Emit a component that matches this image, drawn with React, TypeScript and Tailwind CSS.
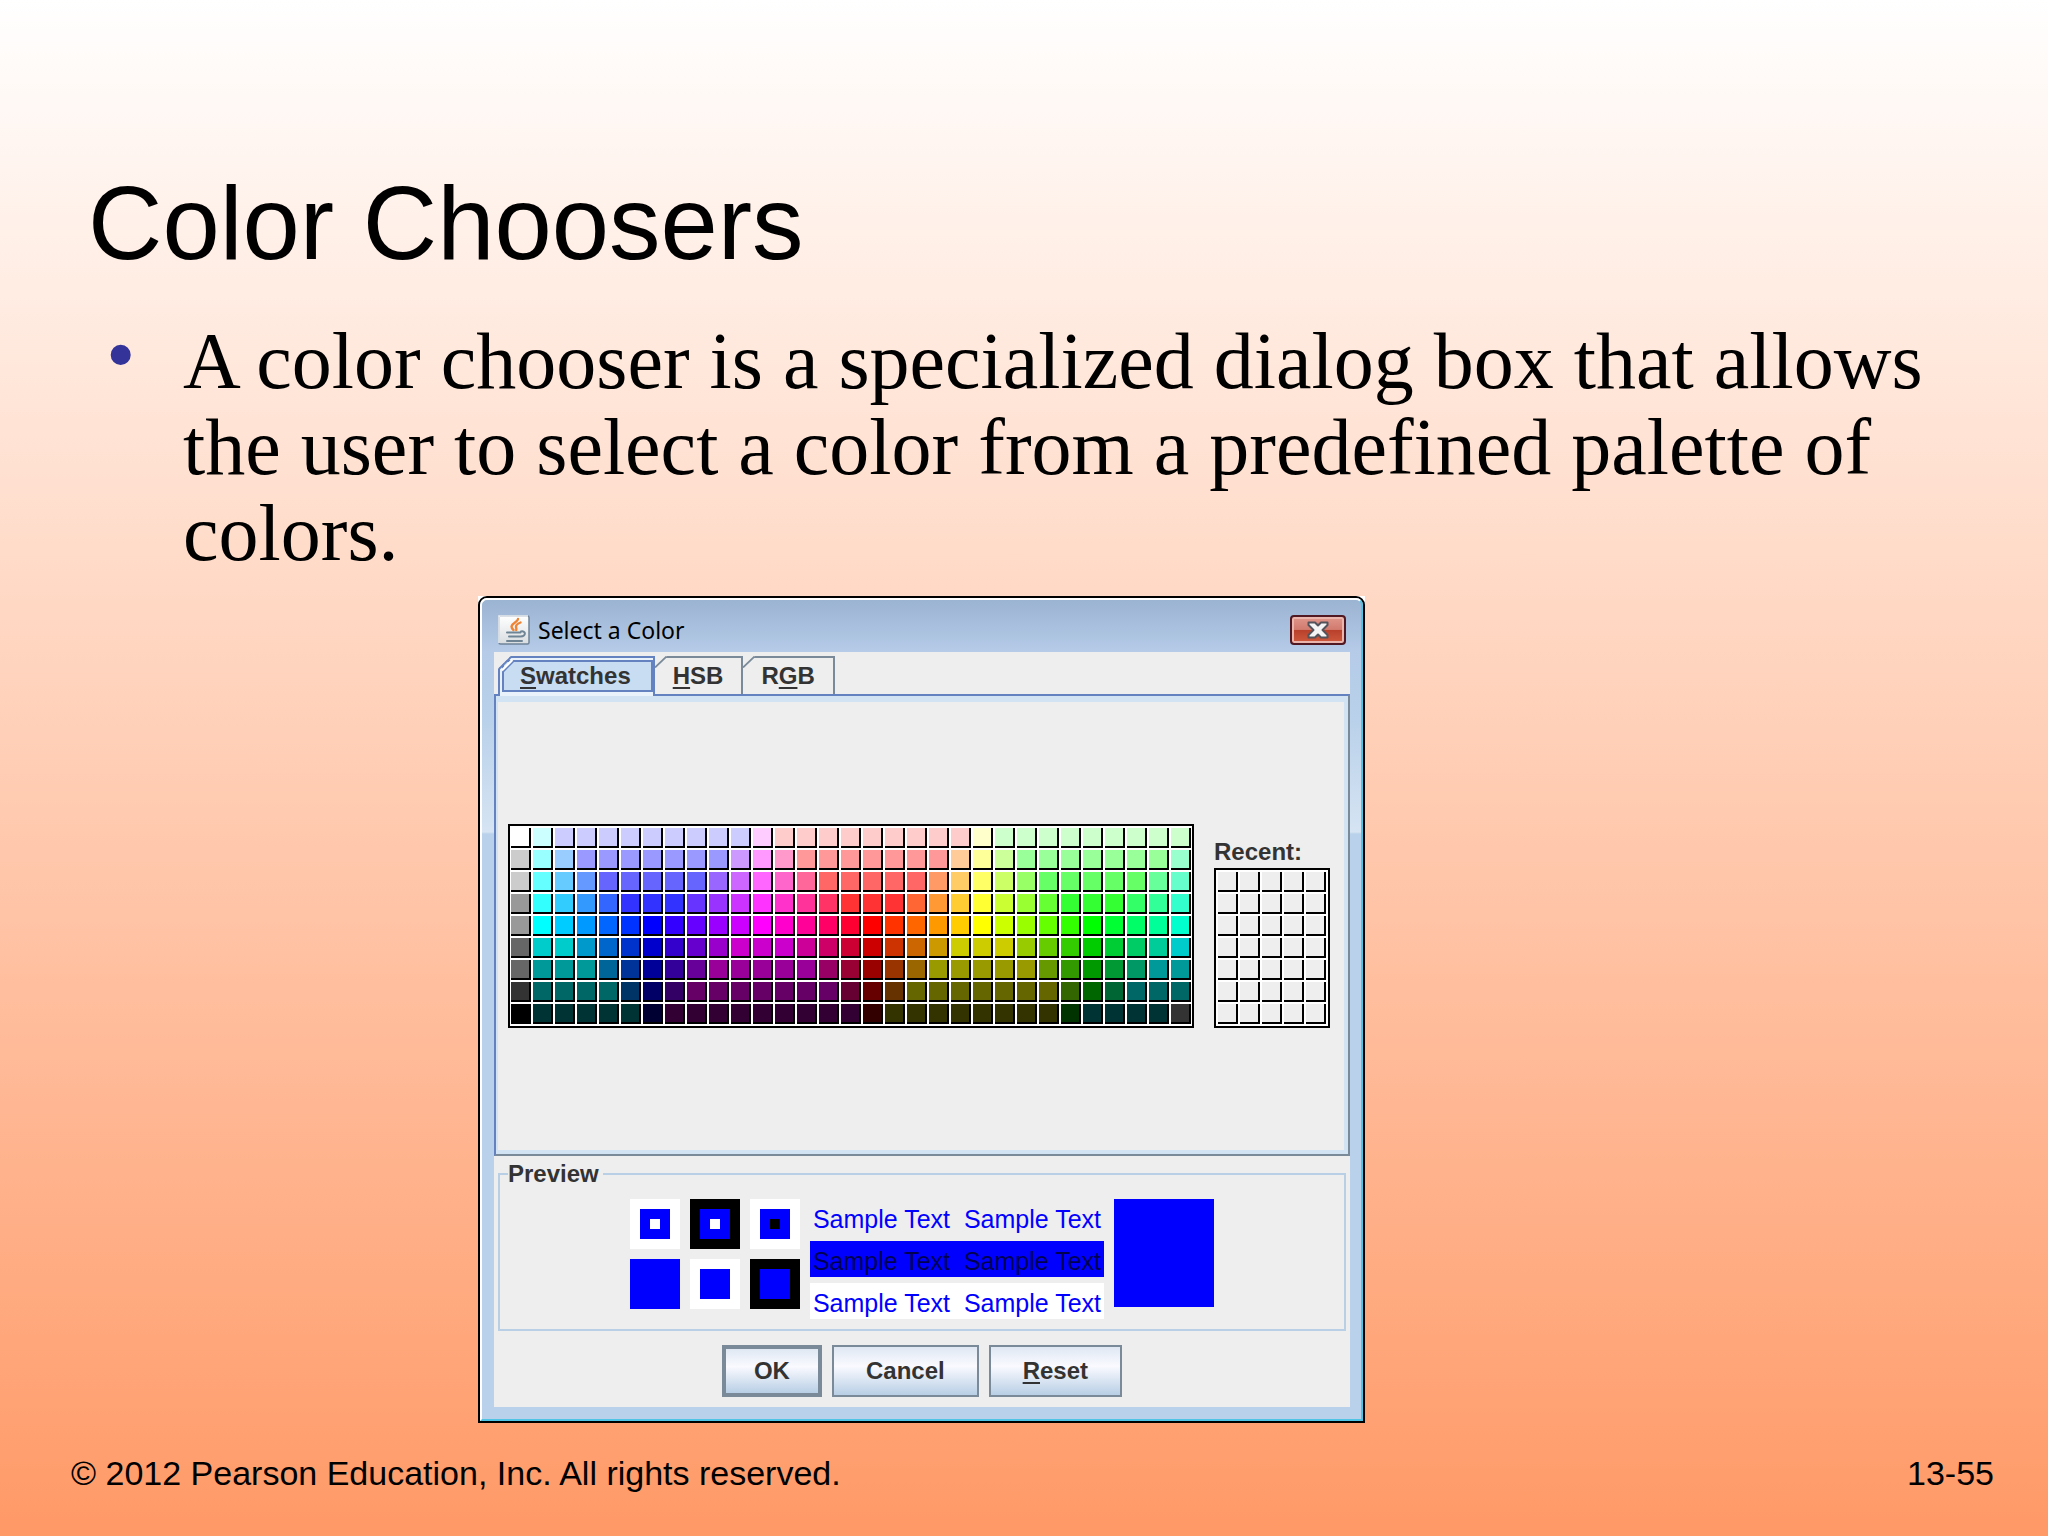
import type { ReactNode } from "react";

type Run = [string, number];

const PALETTE: Run[][] = [
  [["#ffffff", 1], ["#ccffff", 1], ["#ccccff", 9], ["#ffccff", 1], ["#ffcccc", 9], ["#ffffcc", 1], ["#ccffcc", 9]],
  [["#cccccc", 1], ["#99ffff", 1], ["#99ccff", 1], ["#9999ff", 7], ["#cc99ff", 1], ["#ff99ff", 1], ["#ff99cc", 1], ["#ff9999", 7], ["#ffcc99", 1], ["#ffff99", 1], ["#ccff99", 1], ["#99ff99", 7], ["#99ffcc", 1]],
  [["#cccccc", 1], ["#66ffff", 1], ["#66ccff", 1], ["#6699ff", 1], ["#6666ff", 5], ["#9966ff", 1], ["#cc66ff", 1], ["#ff66ff", 1], ["#ff66cc", 1], ["#ff6699", 1], ["#ff6666", 5], ["#ff9966", 1], ["#ffcc66", 1], ["#ffff66", 1], ["#ccff66", 1], ["#99ff66", 1], ["#66ff66", 5], ["#66ff99", 1], ["#66ffcc", 1]],
  [["#999999", 1], ["#33ffff", 1], ["#33ccff", 1], ["#3399ff", 1], ["#3366ff", 1], ["#3333ff", 3], ["#6633ff", 1], ["#9933ff", 1], ["#cc33ff", 1], ["#ff33ff", 1], ["#ff33cc", 1], ["#ff3399", 1], ["#ff3366", 1], ["#ff3333", 3], ["#ff6633", 1], ["#ff9933", 1], ["#ffcc33", 1], ["#ffff33", 1], ["#ccff33", 1], ["#99ff33", 1], ["#66ff33", 1], ["#33ff33", 3], ["#33ff66", 1], ["#33ff99", 1], ["#33ffcc", 1]],
  [["#999999", 1], ["#00ffff", 1], ["#00ccff", 1], ["#0099ff", 1], ["#0066ff", 1], ["#0033ff", 1], ["#0000ff", 1], ["#3300ff", 1], ["#6600ff", 1], ["#9900ff", 1], ["#cc00ff", 1], ["#ff00ff", 1], ["#ff00cc", 1], ["#ff0099", 1], ["#ff0066", 1], ["#ff0033", 1], ["#ff0000", 1], ["#ff3300", 1], ["#ff6600", 1], ["#ff9900", 1], ["#ffcc00", 1], ["#ffff00", 1], ["#ccff00", 1], ["#99ff00", 1], ["#66ff00", 1], ["#33ff00", 1], ["#00ff00", 1], ["#00ff33", 1], ["#00ff66", 1], ["#00ff99", 1], ["#00ffcc", 1]],
  [["#666666", 1], ["#00cccc", 2], ["#0099cc", 1], ["#0066cc", 1], ["#0033cc", 1], ["#0000cc", 1], ["#3300cc", 1], ["#6600cc", 1], ["#9900cc", 1], ["#cc00cc", 3], ["#cc0099", 1], ["#cc0066", 1], ["#cc0033", 1], ["#cc0000", 1], ["#cc3300", 1], ["#cc6600", 1], ["#cc9900", 1], ["#cccc00", 3], ["#99cc00", 1], ["#66cc00", 1], ["#33cc00", 1], ["#00cc00", 1], ["#00cc33", 1], ["#00cc66", 1], ["#00cc99", 1], ["#00cccc", 1]],
  [["#666666", 1], ["#009999", 3], ["#006699", 1], ["#003399", 1], ["#000099", 1], ["#330099", 1], ["#660099", 1], ["#990099", 5], ["#990066", 1], ["#990033", 1], ["#990000", 1], ["#993300", 1], ["#996600", 1], ["#999900", 5], ["#669900", 1], ["#339900", 1], ["#009900", 1], ["#009933", 1], ["#009966", 1], ["#009999", 2]],
  [["#333333", 1], ["#006666", 4], ["#003366", 1], ["#000066", 1], ["#330066", 1], ["#660066", 7], ["#660033", 1], ["#660000", 1], ["#663300", 1], ["#666600", 7], ["#336600", 1], ["#006600", 1], ["#006633", 1], ["#006666", 3]],
  [["#000000", 1], ["#003333", 5], ["#000033", 1], ["#330033", 9], ["#330000", 1], ["#333300", 8], ["#003300", 1], ["#003333", 4], ["#333333", 1]],
];

const SWATCHES = PALETTE.flatMap((row) => row.flatMap(([color, count]) => Array<string>(count).fill(color)));

function Swatch({ color, label }: { color: string; label: string }) {
  return (
    <button
      type="button"
      aria-label={label}
      className="size-5 border-r-2 border-b-2 border-black"
      style={{ backgroundColor: color }}
    />
  );
}

function JavaIcon() {
  return (
    <svg viewBox="0 0 32 30" className="h-[30px] w-8" aria-hidden="true">
      <defs>
        <linearGradient id="java-tile" x1="0" y1="0" x2="0" y2="1">
          <stop offset="0" stopColor="#ffffff" />
          <stop offset="1" stopColor="#d9dde0" />
        </linearGradient>
      </defs>
      <rect x="1" y="1" width="30" height="28" rx="1.5" fill="url(#java-tile)" stroke="#6f8499" strokeWidth="1.5" />
      <path d="M1 28V1H30" fill="none" stroke="#f2f5f8" strokeWidth="1.5" />
      <path
        d="M20 4c0 3-6 4-6.500 7.500 0 1.500.8 2.500 2 3.500M22.500 7.500c-3 1.200-4.700 2.500-4.500 4.500.1 1 .8 1.800.2 3"
        fill="none"
        stroke="#ee8434"
        strokeWidth="2.400"
        strokeLinecap="round"
      />
      <path
        d="M9 17.500h13.500M11 21.500h10.500M9 26h15M23 16.500c5-1 5.500 4.500-.5 5"
        fill="none"
        stroke="#6f8596"
        strokeWidth="2"
        strokeLinecap="round"
      />
    </svg>
  );
}

function TabCorner({ selected }: { selected?: boolean }) {
  return selected ? (
    <svg viewBox="0 0 16 16" className="absolute -top-0.5 -left-0.5 size-4" aria-hidden="true">
      <path d="M0 0H13L0 13Z" fill="#eeeeee" />
      <path d="M1 13L13 1" stroke="#6382bf" strokeWidth="1.800" />
      <path d="M4 14.500L14.500 4" stroke="#ffffff" strokeWidth="2.500" />
      <path d="M5 16L16 5" stroke="#6382bf" strokeWidth="1.500" />
    </svg>
  ) : (
    <svg viewBox="0 0 12 12" className="absolute -top-0.5 left-0 size-3" aria-hidden="true">
      <path d="M0 0H12L0 12Z" fill="#eeeeee" />
      <path d="M0 11.500L11.500 0.500" stroke="#7a8a99" strokeWidth="1.800" />
    </svg>
  );
}

function Key({ children }: { children: ReactNode }) {
  return <span className="underline decoration-2 underline-offset-3">{children}</span>;
}

function PlainTab({ children }: { children: ReactNode }) {
  return (
    <button
      type="button"
      role="tab"
      aria-selected="false"
      className="relative border-t-2 border-r-2 border-[#7a8a99] px-[18px] leading-9"
    >
      <TabCorner />
      {children}
    </button>
  );
}

function Bull({ outer, middle, inner }: { outer: string; middle: string; inner: string }) {
  return (
    <div className={`flex size-[50px] items-center justify-center ${outer}`}>
      <div className={`flex size-[30px] items-center justify-center ${middle}`}>
        <div className={`size-2.5 ${inner}`} />
      </div>
    </div>
  );
}

function SampleRow({ tone }: { tone: string }) {
  return <p className={`h-9 px-[3px] pt-1 text-[25px] leading-8 whitespace-pre ${tone}`}>{"Sample Text  Sample Text"}</p>;
}

const buttonFace = "border-[#7a8a99] bg-linear-to-b from-[#dfe8f3] via-[#fafaff] via-40% to-[#b8cfe5]";

function ColorDialog() {
  return (
    <section
      role="dialog"
      aria-label="Select a Color"
      className="w-[887px] rounded-t-[9px] border-2 border-black bg-[#b9d1ea] font-['Liberation_Sans',Arial,sans-serif] text-2xl text-[#333333]"
    >
      <div className="rounded-t-[7px] border-2 border-t-white border-r-[#4fc4e4] border-b-[#4fc4e4] border-l-white bg-[linear-gradient(to_bottom,#9bb4d2_0px,#b5cbe8_52px,#b9d1ea_120px,#d6e4f3_232px,#b9d1ea_234px)] pr-[11px] pb-3 pl-3">
        <header className="flex h-[52px] items-center gap-2 px-1 pt-2">
          <JavaIcon />
          <h2 className="grow font-['Noto_Sans','Open_Sans',sans-serif] text-[23px] leading-8 text-black">Select a Color</h2>
          <button
            type="button"
            aria-label="Close"
            className="flex h-[30px] w-14 items-center justify-center rounded-[4px] border-2 border-[#4f1822] bg-[linear-gradient(to_bottom,#e0968c_0%,#d27a6e_48%,#b8402c_50%,#cf5a3e_100%)] shadow-[inset_0_0_0_2px_#eab5ac]"
          >
            <svg viewBox="0 0 22 18" className="h-[18px] w-[22px]" aria-hidden="true">
              <path
                d="M1.500 1.500H8L11 4.500L14 1.500H20.500V4L15.500 9L20.500 14V16.500H14L11 13.500L8 16.500H1.500V14L6.500 9L1.500 4Z"
                fill="#f4f4f4"
                stroke="#53535c"
                strokeWidth="2"
                strokeLinejoin="round"
              />
            </svg>
          </button>
        </header>

        <div className="bg-[#eeeeee] pt-1 pb-2.5">
          <div role="tablist" className="flex pl-1 font-bold">
            <button
              type="button"
              role="tab"
              aria-selected="true"
              className="relative -mb-0.5 border-t-2 border-r-2 border-l-2 border-[#6382bf] bg-[#e9f1fa] pt-0.5 pb-1 pl-0.5"
            >
              <span className="block border-2 border-[#6382bf] bg-[#c8ddf2] pr-5 pl-4 leading-7">
                <Key>S</Key>watches
              </span>
              <TabCorner selected />
            </button>
            <PlainTab>
              <Key>H</Key>SB
            </PlainTab>
            <PlainTab>
              R<Key>G</Key>B
            </PlainTab>
          </div>

          <div role="tabpanel" className="border-2 border-t-[#6382bf] border-r-[#7a8a99] border-b-[#7a8a99] border-l-[#6382bf]">
            <div className="flex items-end justify-center gap-5 border-4 border-t-[6px] border-l-2 border-[#d2e3f4] pt-[122px] pr-1 pb-[122px]">
              <div className="grid grid-cols-[repeat(31,20px)] gap-0.5 border-2 border-black bg-white px-px py-0.5">
                {SWATCHES.map((color, i) => (
                  <Swatch key={i} color={color} label={color} />
                ))}
              </div>
              <div>
                <h3 className="leading-8 font-bold">Recent:</h3>
                <div className="grid w-max grid-cols-[repeat(5,20px)] gap-0.5 border-2 border-black bg-white p-0.5">
                  {Array.from({ length: 35 }, (_, i) => (
                    <Swatch key={i} color="#eeeeee" label={`Recent color ${i + 1}`} />
                  ))}
                </div>
              </div>
            </div>
          </div>

          <fieldset className="mx-1 mt-1 border-2 border-[#b8cfe5]">
            <legend className="ml-2 pr-1 leading-7 font-bold">Preview</legend>
            <div className="flex items-start justify-center gap-2.5 pt-[11px] pb-2.5">
              <div className="grid grid-cols-3 gap-2.5">
                <Bull outer="bg-white" middle="bg-[#0000ff]" inner="bg-white" />
                <Bull outer="bg-black" middle="bg-[#0000ff]" inner="bg-white" />
                <Bull outer="bg-white" middle="bg-[#0000ff]" inner="bg-black" />
                <Bull outer="bg-[#0000ff]" middle="bg-[#0000ff]" inner="bg-[#0000ff]" />
                <Bull outer="bg-white" middle="bg-[#0000ff]" inner="bg-[#0000ff]" />
                <Bull outer="bg-black" middle="bg-[#0000ff]" inner="bg-[#0000ff]" />
              </div>
              <div className="flex flex-col gap-1.5">
                <SampleRow tone="text-[#0000ff]" />
                <SampleRow tone="bg-[#0000ff] text-black/70" />
                <SampleRow tone="bg-white text-[#0000ff]" />
              </div>
              <div className="h-[108px] w-[100px] bg-[#0000ff]" />
            </div>
          </fieldset>

          <div className="mt-3.5 flex justify-center gap-2.5 font-bold">
            <button type="button" className={`h-[52px] border-4 px-7 ${buttonFace}`}>
              OK
            </button>
            <button type="button" className={`h-[52px] border-2 px-8 ${buttonFace}`}>
              Cancel
            </button>
            <button type="button" className={`h-[52px] border-2 px-8 ${buttonFace}`}>
              <Key>R</Key>eset
            </button>
          </div>
        </div>
      </div>
    </section>
  );
}

export default function App() {
  return (
    <main className="flex min-h-screen flex-col bg-linear-to-b from-white to-[#ff9966] font-['Liberation_Sans',Arial,sans-serif] text-black">
      <h1 className="pt-40 pl-[88px] text-[103px] leading-[128px]">Color Choosers</h1>
      <ul className="pt-[30px] pr-20 pl-[106px] font-['Liberation_Serif','Times_New_Roman',serif] text-[80px] leading-[86px]">
        <li className="flex">
          <span className="w-[77px] shrink-0 text-[84px] leading-[74px] text-[#333399]">•</span>
          <p>A color chooser is a specialized dialog box that allows the user to select a color from a predefined palette of colors.</p>
        </li>
      </ul>
      <div className="mt-5 ml-[478px] w-max bg-white">
        <ColorDialog />
      </div>
      <footer className="mt-auto flex justify-between pr-[54px] pb-[43px] pl-[71px] text-[34px] leading-10">
        <p>© 2012 Pearson Education, Inc. All rights reserved.</p>
        <p>13-55</p>
      </footer>
    </main>
  );
}
